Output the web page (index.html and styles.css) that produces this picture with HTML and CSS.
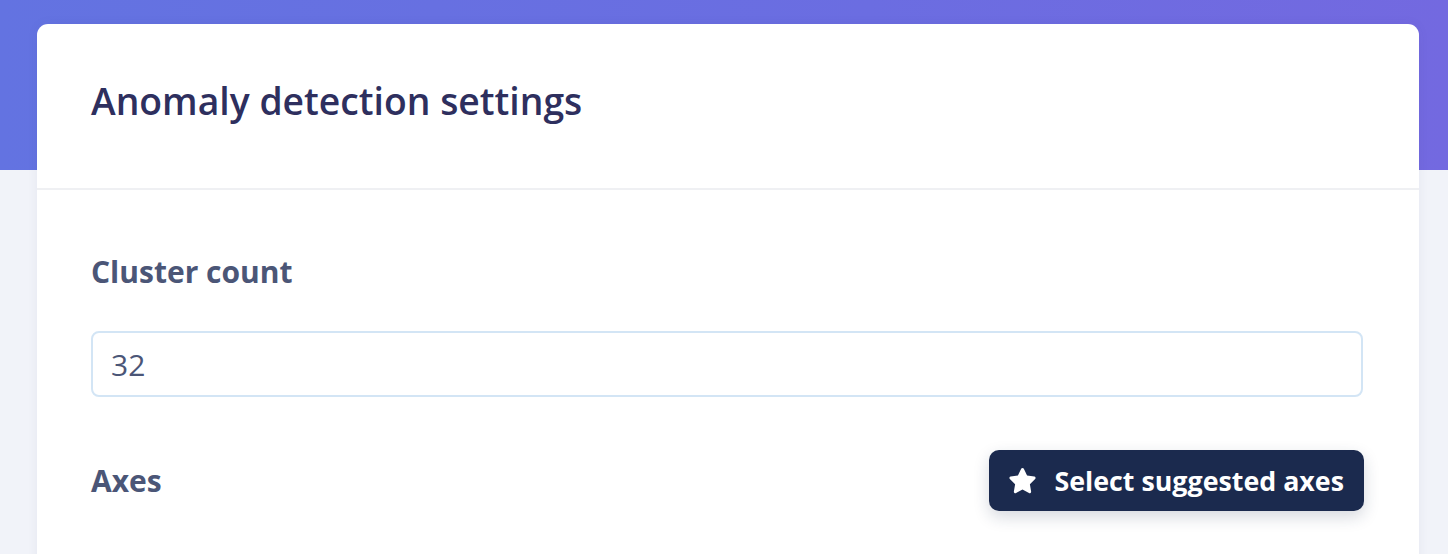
FILE: index.html
```html
<!DOCTYPE html>
<html lang="en">
<head>
<meta charset="utf-8">
<title>Anomaly detection settings</title>
<link rel="stylesheet" href="styles.css">
</head>
<body>
<div class="page">
  <div class="band"></div>
  <main class="card">
    <header class="card-header">
      <h1 class="title">Anomaly detection settings</h1>
    </header>
    <section class="card-body">
      <label class="field-label" for="cluster">Cluster count</label>
      <input id="cluster" class="text-input" type="text" value="32">
      <div class="axes-row">
        <span class="field-label axes-label">Axes</span>
        <button class="suggest-btn" type="button">
          <svg class="star" viewBox="0 0 24 24" width="29" height="29" aria-hidden="true">
            <path d="M12 1.6c.47 0 .9.27 1.1.7l2.68 5.5 6.01.88c.46.07.84.39.98.83.14.44.03.92-.3 1.24l-4.36 4.29 1.03 6.06c.08.46-.11.92-.49 1.19-.38.27-.88.3-1.29.09L12 19.55l-5.36 2.83c-.41.21-.91.18-1.29-.09-.38-.27-.57-.73-.49-1.19l1.03-6.06-4.36-4.29c-.33-.32-.44-.8-.3-1.24.14-.44.52-.76.98-.83l6.01-.88 2.68-5.5c.2-.43.63-.7 1.1-.7z" fill="#ffffff"/>
          </svg>
          <span>Select suggested axes</span>
        </button>
      </div>
    </section>
  </main>
</div>
</body>
</html>
```
FILE: styles.css
```css
html, body {
  margin: 0;
  padding: 0;
}
body {
  background: #f1f3f9;
  font-family: "Open Sans", "Noto Sans", sans-serif;
  overflow: hidden;
}
.page {
  position: relative;
  min-height: 554px;
  padding: 24px 29px 0 37px;
}
.band {
  position: absolute;
  left: 0;
  top: 0;
  right: 0;
  height: 170px;
  background: linear-gradient(90deg, #6373e1 0%, #6b6de1 60%, #7369e0 100%);
}
.card {
  position: relative;
  background: #ffffff;
  border-radius: 11px 11px 0 0;
  min-height: 560px;
  box-shadow: 0 0 12px rgba(60, 70, 120, 0.06);
}
.card-header {
  height: 166px;
  box-sizing: border-box;
  padding: 52px 54px 0;
  border-bottom: 2px solid #eff0f3;
}
.title {
  margin: 0;
  font-size: 37.3px;
  line-height: 50px;
  font-weight: 600;
  color: #2e2f5e;
  letter-spacing: 0;
}
.card-body {
  padding: 62px 56px 0 54px;
}
.field-label {
  display: block;
  font-size: 30px;
  line-height: 40px;
  font-weight: 700;
  color: #4b5677;
}
.text-input {
  display: block;
  box-sizing: border-box;
  width: 100%;
  height: 66px;
  margin-top: 39px;
  padding: 0 18px;
  border: 2px solid #d3e5f5;
  border-radius: 8px;
  font-family: inherit;
  font-size: 30px;
  color: #4b5677;
  background: #fff;
  outline: none;
}
.axes-row {
  display: flex;
  align-items: center;
  justify-content: space-between;
  margin-top: 53px;
}
.axes-label {
  display: inline-block;
}
.suggest-btn {
  display: flex;
  align-items: center;
  gap: 17px;
  height: 61px;
  margin-right: -1px;
  padding: 0 20px 0 19px;
  border: none;
  border-radius: 10px;
  background: #1b2a4e;
  color: #ffffff;
  font-family: inherit;
  font-size: 26.8px;
  font-weight: 700;
  box-shadow: 0 6px 16px rgba(27, 42, 78, 0.18);
  cursor: pointer;
}
.star {
  display: block;
  flex: none;
}
```
